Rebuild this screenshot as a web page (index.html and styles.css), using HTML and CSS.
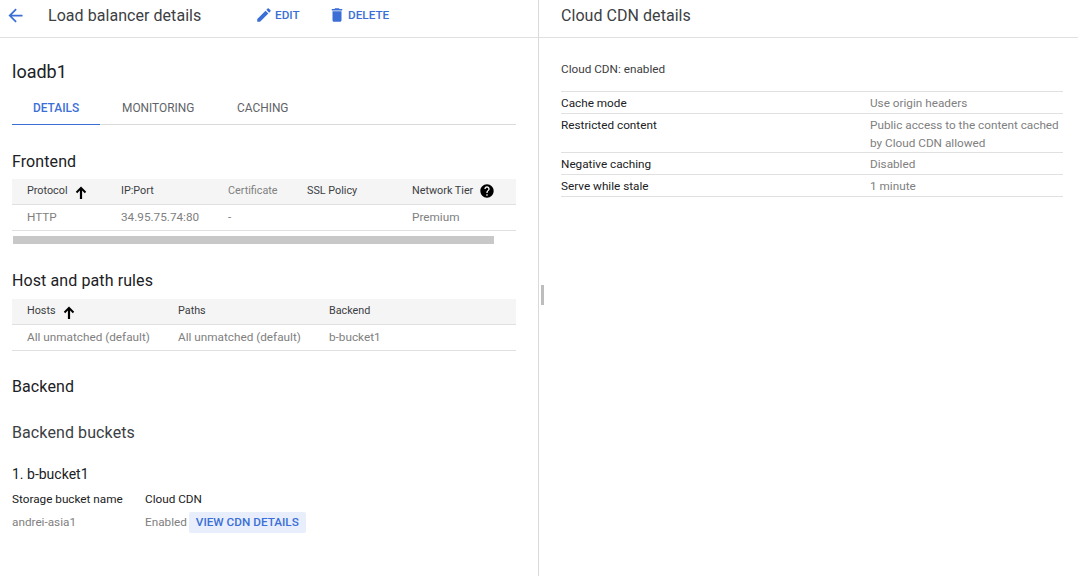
FILE: index.html
```html
<!DOCTYPE html>
<html>
	<head>
		<meta charset="UTF-8">
		<title>Load balancer details</title>
		<link rel="stylesheet" href="styles.css">
	</head>

	<body>
		<div id="box">
			<div class="left">
				<div class="bar">
					<svg class="back" viewBox="0 0 24 24" width="21" height="21"><path d="M20 11H7.83l5.59-5.59L12 4l-8 8 8 8 1.41-1.41L7.83 13H20v-2z"/></svg>
					<h1 class="barTitle">Load balancer details</h1>
					<a class="act actEdit">
						<svg viewBox="0 0 24 24" width="18" height="18"><path d="M3 17.25V21h3.75L17.81 9.94l-3.75-3.75L3 17.25zM20.71 7.04a1 1 0 0 0 0-1.41l-2.34-2.34a1 1 0 0 0-1.41 0l-1.83 1.83 3.75 3.75 1.83-1.83z"/></svg>
						EDIT
					</a>
					<a class="act actDelete">
						<svg viewBox="0 0 24 24" width="18" height="18"><path d="M6 19c0 1.1.9 2 2 2h8c1.1 0 2-.9 2-2V7H6v12zM19 4h-3.5l-1-1h-5l-1 1H5v2h14V4z"/></svg>
						DELETE
					</a>
				</div>

				<div class="content">
					<h2 class="name">loadb1</h2>
					<ul class="tabs">
						<li class="on">DETAILS</li>
						<li class="tabMon">MONITORING</li>
						<li class="tabCache">CACHING</li>
					</ul>

					<h3 class="section">Frontend</h3>
					<div class="tb tbFront">
						<div class="row head">
							<span>Protocol <svg class="sort" viewBox="0 0 16 16" width="16" height="16"><path d="M8 1.6L2.8 6.8l1.4 1.4L6.9 5.5V14h2.2V5.5l2.7 2.7 1.4-1.4z"/></svg></span>
							<span>IP:Port</span>
							<span class="muted">Certificate</span>
							<span>SSL Policy</span>
							<span>Network Tier <svg class="help" viewBox="0 0 24 24" width="16" height="16"><path d="M12 2C6.48 2 2 6.48 2 12s4.48 10 10 10 10-4.48 10-10S17.52 2 12 2zm1 17h-2v-2h2v2zm2.07-7.75l-.9.92C13.45 12.9 13 13.5 13 15h-2v-.5c0-1.1.45-2.1 1.17-2.83l1.24-1.26c.37-.36.59-.86.59-1.41 0-1.1-.9-2-2-2s-2 .9-2 2H8c0-2.21 1.79-4 4-4s4 1.79 4 4c0 .88-.36 1.68-.93 2.25z"/></svg></span>
						</div>
						<div class="row">
							<span>HTTP</span>
							<span>34.95.75.74:80</span>
							<span>-</span>
							<span></span>
							<span>Premium</span>
						</div>
					</div>
					<div class="scroll"></div>

					<h3 class="section">Host and path rules</h3>
					<div class="tb tbHost">
						<div class="row head">
							<span>Hosts <svg class="sort" viewBox="0 0 16 16" width="16" height="16"><path d="M8 1.6L2.8 6.8l1.4 1.4L6.9 5.5V14h2.2V5.5l2.7 2.7 1.4-1.4z"/></svg></span>
							<span>Paths</span>
							<span>Backend</span>
						</div>
						<div class="row">
							<span>All unmatched (default)</span>
							<span>All unmatched (default)</span>
							<span>b-bucket1</span>
						</div>
					</div>

					<h3 class="section">Backend</h3>
					<h3 class="sub">Backend buckets</h3>
					<h4 class="bucket">1. b-bucket1</h4>
					<div class="info">
						<div class="infoCol">
							<b>Storage bucket name</b>
							<span>andrei-asia1</span>
						</div>
						<div class="infoCol">
							<b>Cloud CDN</b>
							<span>Enabled <a class="cdnBtn">VIEW CDN DETAILS</a></span>
						</div>
					</div>
				</div>
			</div>

			<div class="handle"></div>

			<div class="right">
				<div class="bar">
					<h1 class="barTitle">Cloud CDN details</h1>
				</div>
				<div class="content">
					<p class="status">Cloud CDN: enabled</p>
					<ul class="props">
						<li><b>Cache mode</b><span>Use origin headers</span></li>
						<li><b>Restricted content</b><span>Public access to the content cached by Cloud CDN allowed</span></li>
						<li><b>Negative caching</b><span>Disabled</span></li>
						<li><b>Serve while stale</b><span>1 minute</span></li>
					</ul>
				</div>
			</div>
		</div>
	</body>
</html>
```

FILE: styles.css
```css
*{
	margin: 0;
	padding: 0;
	box-sizing: border-box;
}
html, body{
	height: 100%;
	overflow: hidden;
}
body{
	background: #fff;
	color: #212121;
	font-family: Roboto, "Liberation Sans", sans-serif;
	font-size: 11.75px;
}
#box{
	display: flex;
	width: 1078px;
	height: 576px;
	position: relative;
}
.left{
	width: 539px;
	height: 100%;
	border-right: 1px solid #dadada;
}
.right{
	flex: 1;
}

.bar{
	height: 38px;
	display: flex;
	align-items: center;
	border-bottom: 1px solid #e0e0e0;
	padding-bottom: 7px;
}
.barTitle{
	font-size: 16px;
	font-weight: 400;
	letter-spacing: .05px;
	color: #3c4043;
}
.left .bar{
	padding-left: 5px;
}
.left .barTitle{
	margin-left: 22px;
	width: 207px;
}
.right .bar{
	padding-left: 22px;
}
.back{
	fill: #3b6fd6;
}
.act{
	display: flex;
	align-items: center;
	color: #3b6fd6;
	fill: #3b6fd6;
	font-weight: 500;
	gap: 2px;
}
.actEdit{
	width: 73px;
}

.left .content{
	padding: 0 22px 0 12px;
}
.name{
	font-size: 18px;
	font-weight: 400;
	line-height: 24px;
	margin-top: 22px;
	color: #202124;
}
.tabs{
	display: flex;
	list-style: none;
	height: 34px;
	margin-top: 7px;
	border-bottom: 1px solid #dadada;
	color: #5f6368;
	font-size: 11.9px;
	line-height: 34px;
}
.tabs li{
	height: 34px;
}
.tabs .on{
	width: 88px;
	padding-left: 21px;
	color: #3b6fd6;
	font-weight: 500;
	border-bottom: 1px solid #3b6fd6;
}
.tabMon{
	margin-left: 22px;
	width: 115px;
}

.section{
	font-size: 16px;
	font-weight: 400;
	line-height: 20px;
	letter-spacing: .1px;
	margin-top: 27px;
	color: #202124;
}

.tb{
	margin-top: 7px;
}
.tbHost{
	margin-top: 8px;
}
.tbHost + .section{
	margin-top: 26px;
}
.row{
	display: grid;
	height: 26px;
	align-items: center;
	border-bottom: 1px solid #e0e0e0;
	padding-bottom: 1px;
	color: #808080;
}
.row span{
	padding-left: 15px;
	white-space: nowrap;
}
.tbFront .row{
	grid-template-columns: 94px 107px 79px 105px 1fr;
}
.tbHost .row{
	grid-template-columns: 151px 151px 1fr;
}
.head{
	background: #f5f5f5;
	color: #3c4043;
	font-size: 10.8px;
	padding-bottom: 2px;
}
.head .muted{
	color: #808080;
}
.head span{
	display: flex;
	align-items: center;
	gap: 3px;
}
.sort{
	margin: 4px 0 0 2px;
	fill: #000;
}
.help{
	margin-left: 3px;
	fill: #000;
}
.scroll{
	width: 481px;
	height: 8px;
	margin: 5px 0 0 1px;
	background: #c8c8c8;
}

.sub{
	font-size: 16px;
	font-weight: 400;
	line-height: 20px;
	letter-spacing: .1px;
	margin-top: 26px;
	color: #3c4043;
}
.bucket{
	font-size: 14px;
	font-weight: 400;
	line-height: 18px;
	margin-top: 22px;
	color: #202124;
}
.info{
	display: flex;
	margin-top: 8px;
}
.infoCol{
	display: flex;
	flex-direction: column;
}
.infoCol:first-child{
	width: 133px;
}
.infoCol b{
	font-weight: 400;
	line-height: 16px;
	color: #202124;
}
.infoCol span{
	color: #808080;
	margin-top: 5px;
	line-height: 20px;
}
.cdnBtn{
	display: inline-block;
	margin-left: -1px;
	padding: 0 7px;
	height: 21px;
	line-height: 21px;
	background: #e8eefb;
	color: #3b6fd6;
	font-weight: 500;
	border-radius: 2px;
}

.handle{
	position: absolute;
	left: 541px;
	top: 285px;
	width: 3px;
	height: 20px;
	background: #bdbdbd;
}

.right .content{
	padding: 0 15px 0 22px;
}
.status{
	margin-top: 23px;
	line-height: 16px;
	color: #3c4043;
}
.props{
	list-style: none;
	margin-top: 14px;
	border-top: 1px solid #e0e0e0;
}
.props li{
	display: flex;
	padding: 2px 0 1px 0;
	line-height: 18px;
	border-bottom: 1px solid #e0e0e0;
}
.props li:nth-child(2){
	padding-bottom: 0;
}
.props b{
	width: 309px;
	font-weight: 400;
	color: #202124;
}
.props span{
	flex: 1;
	color: #808080;
}
```
